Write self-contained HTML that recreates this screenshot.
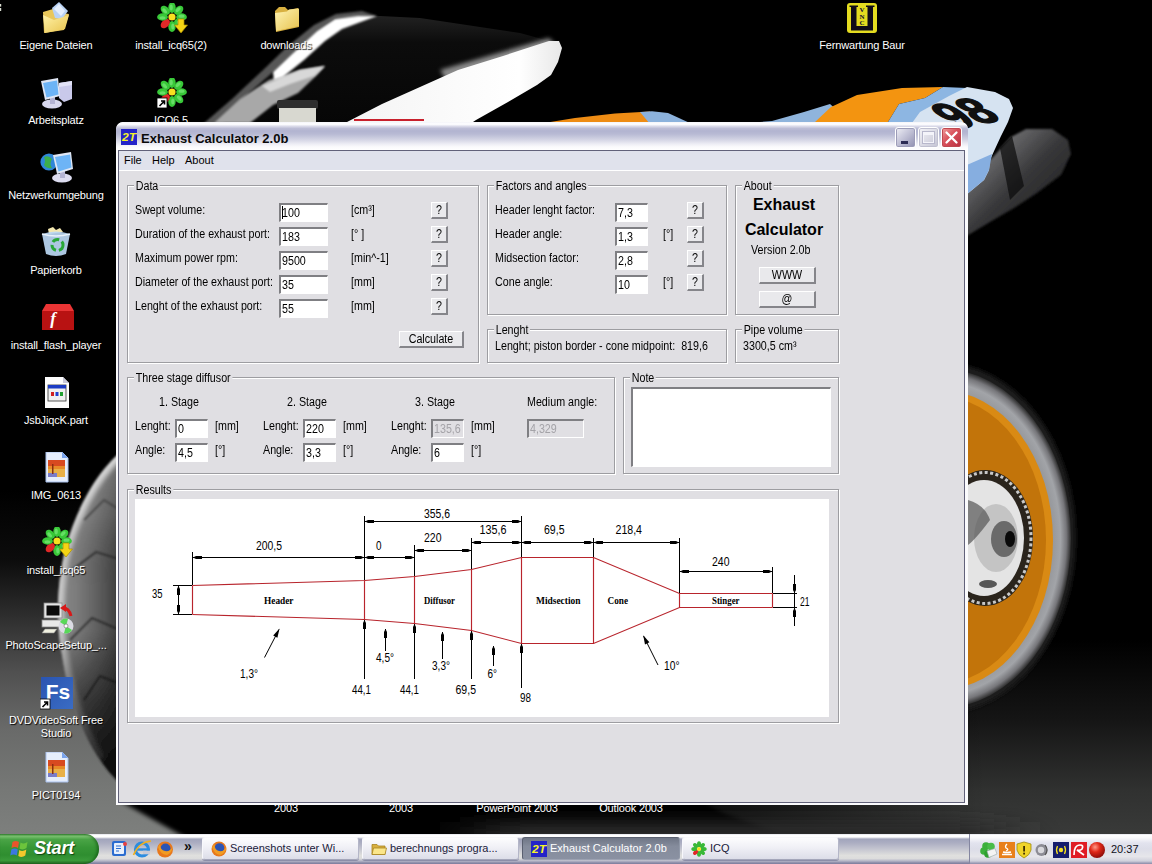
<!DOCTYPE html>
<html lang="de">
<head>
<meta charset="utf-8">
<title>Exhaust Calculator 2.0b</title>
<style>
*{box-sizing:border-box;margin:0;padding:0}
html,body{width:1152px;height:864px;overflow:hidden;background:#000}
body{position:relative;font-family:"Liberation Sans",sans-serif;font-size:11px;color:#000}
#bg{position:absolute;left:0;top:0;width:1152px;height:864px}
/* desktop icons */
.ico{position:absolute;width:120px;text-align:center;color:#fff;font-size:11px;line-height:13px;text-shadow:1px 1px 1px #000;white-space:nowrap;letter-spacing:-.15px}
.ico.w{white-space:normal}
.dic{position:absolute}
/* window */
#win{position:absolute;left:116px;top:122px;width:852px;height:683px;background:#fbfbfd;border-radius:7px 7px 0 0;overflow:hidden}
#title{position:absolute;left:0;top:0;width:852px;height:28px;border-radius:7px 7px 0 0;
 background:linear-gradient(#f2f2f7 0,#fcfcfe 4%,#fafafd 9%,#dcdcea 15%,#bcbdd6 23%,#b2b4d0 32%,#b8bad4 43%,#d0d1e2 61%,#eeeef5 79%,#fafafc 89%,#fff 100%)}
#title .tt{position:absolute;left:25px;top:9px;font-weight:bold;font-size:13px;line-height:16px;color:#0a0a0a;white-space:nowrap}
#inner{position:absolute;left:2px;top:28px;width:847px;height:653px;border:1px solid #62627a;background:#e0dfe3}
#menu{position:absolute;left:3px;top:29px;width:845px;height:20px;border-bottom:1px solid #fff;background:#e0e2ec}
#menu span{position:absolute;top:3px;line-height:13px}
#form{position:absolute;left:0;top:0;width:1152px;height:864px}
.t{position:absolute;white-space:nowrap;font-size:12.5px;line-height:13px;transform:scaleX(.856);transform-origin:0 0}
.gb{position:absolute;border:1px solid #9d9da1;box-shadow:1px 1px 0 #fff, inset 1px 1px 0 #fff}
.lg{background:#e0dfe3;padding:0 2px 0 2px;margin-left:-2px}
.in{position:absolute;background:#fff;border-style:solid;border-width:2px 1px 1px 2px;border-color:#7f7f83 #fff #fff #7f7f83;overflow:hidden}
.in .t{left:-1px;top:0px}
.in.dis{background:#e0dfe3;color:#a4a3a8}
.caret{position:absolute;left:1px;top:1px;width:1px;height:13px;background:#000}
.btn{position:absolute;background:#e9e9ec;border-style:solid;border-width:1px 2px 2px 1px;border-color:#fff #85858a #85858a #fff}
.tc{position:absolute;left:0;right:0;top:1px;text-align:center;white-space:nowrap;font-size:12.5px;line-height:13px;transform:scaleX(.856)}
.big{position:absolute;text-align:center;font-weight:bold;font-size:16px;line-height:20px;white-space:nowrap}
.ct{font-family:"Liberation Sans",sans-serif;font-size:12.5px;fill:#000}
.cs{font-family:"Liberation Serif",serif;font-size:10.5px;font-weight:bold;fill:#000}
#taskbar{position:absolute;left:0;top:834px;width:1152px;height:30px;
 background:linear-gradient(#d4d5e0 0,#fff 3%,#fff 10%,#a2a5bc 17%,#acaec2 30%,#c4c5d0 50%,#e0e0de 72%,#dcdcdc 82%,#b4b5c6 90%,#8c8ca8 96%,#7c7c9c 100%)}
#start{position:absolute;left:0;top:0;width:99px;height:30px;border-radius:0 14px 14px 0/0 15px 15px 0;
 background:linear-gradient(#3a8a36 0,#7cc272 7%,#4aa446 18%,#379636 45%,#2f8e30 70%,#3a9a3a 88%,#256a24 100%);box-shadow:inset -2px 0 3px rgba(0,60,0,.45)}
#start span{position:absolute;left:34px;top:4px;font-size:18px;line-height:20px;font-weight:bold;font-style:italic;color:#fff;text-shadow:1px 1px 1px rgba(0,40,0,.7);letter-spacing:-.2px}
.tb{position:absolute;top:3px;height:23px;border-radius:3px;border:1px solid #f8f8fc;border-bottom-color:#a4a6ba;border-right-color:#b4b6c8;
 background:linear-gradient(#fdfdfe 0,#f0f0f6 45%,#dcdde8 100%);box-shadow:0 1px 0 #8c8ea8}
.tb svg{position:absolute;left:8px;top:3px}
.tb span{position:absolute;left:27px;top:4px;line-height:13px;font-size:11px;white-space:nowrap;color:#20203a}
.tb.act{background:linear-gradient(#6f7686 0,#858c9c 40%,#8a91a2 100%);border-color:#5a6070 #9098a8 #9ca2b2 #5a6070;box-shadow:none}
.tb.act span{color:#fff}
#tray{position:absolute;left:969px;top:0;width:183px;height:30px;border-left:1px solid #8486a0;
 background:linear-gradient(#d4d5e0 0,#fff 3%,#fafafc 12%,#e2e3ee 30%,#dcdde8 50%,#e6e6ea 75%,#d0d1dc 90%,#9c9cb6 97%,#8c8ca8 100%)}
.clk{position:absolute;left:141px;top:9px;font-size:11px;line-height:13px;color:#101020}
.ti{position:absolute;left:5px;top:7px}
.cb{position:absolute;top:5px;width:21px;height:21px;border-radius:3px;border:1px solid #fff}
.cb.mn{left:779px;background:linear-gradient(135deg,#f0f0f6 0,#c4c4d8 45%,#8e8eb0 100%);box-shadow:inset 0 0 0 1px #9c9cb8}
.cb.mn i{position:absolute;left:5px;top:13px;width:7px;height:3px;background:#2c2c54}
.cb.mx{left:802px;background:linear-gradient(135deg,#f4f4f8 0,#dcdce6 50%,#c4c4d4 100%);box-shadow:inset 0 0 0 1px #c0c0d0}
.cb.mx i{position:absolute;left:4px;top:4px;width:11px;height:11px;border:1px solid #f4f4fa;border-top-width:3px;box-shadow:0 0 0 1px #b8b8cc}
.cb.cl{left:825px;background:linear-gradient(135deg,#f0a0a0 0,#d8505a 45%,#b83040 100%);box-shadow:inset 0 0 0 1px #c04850}
.cb.cl svg{position:absolute;left:-1px;top:-1px}
</style>
</head>
<body>
<svg id="bg" viewBox="0 0 1152 864" width="1152" height="864">
<defs>
 <linearGradient id="flL" gradientUnits="userSpaceOnUse" x1="0" y1="490" x2="0" y2="840">
  <stop offset="0" stop-color="#000"/><stop offset=".2" stop-color="#0c0c0c"/><stop offset=".357" stop-color="#2d2d2d"/><stop offset=".52" stop-color="#505050"/><stop offset=".683" stop-color="#696a69"/><stop offset=".857" stop-color="#767876"/><stop offset="1" stop-color="#7e807e"/>
 </linearGradient>
 <linearGradient id="flR" gradientUnits="userSpaceOnUse" x1="0" y1="640" x2="0" y2="840">
  <stop offset="0" stop-color="#000"/><stop offset=".4" stop-color="#151515"/><stop offset=".75" stop-color="#303130"/><stop offset="1" stop-color="#3a3b3a"/>
 </linearGradient>
 <linearGradient id="flRm" x1="0" y1="0" x2="1" y2="0">
  <stop offset="0" stop-color="#000" stop-opacity="1"/><stop offset=".35" stop-color="#000" stop-opacity=".5"/><stop offset=".7" stop-color="#000" stop-opacity="0"/>
 </linearGradient>
 <linearGradient id="tyL" gradientUnits="userSpaceOnUse" x1="56" y1="0" x2="260" y2="0">
  <stop offset="0" stop-color="#8a8a8a"/><stop offset=".1" stop-color="#7c7c7c"/><stop offset=".2" stop-color="#606060"/><stop offset=".32" stop-color="#3a3a3a"/><stop offset="1" stop-color="#101010"/>
 </linearGradient>
 <linearGradient id="tyLv" gradientUnits="userSpaceOnUse" x1="0" y1="445" x2="0" y2="800">
  <stop offset="0" stop-color="#fff" stop-opacity=".28"/><stop offset=".2" stop-color="#fff" stop-opacity=".12"/><stop offset=".4" stop-color="#000" stop-opacity="0"/><stop offset=".52" stop-color="#000" stop-opacity="0"/><stop offset=".72" stop-color="#000" stop-opacity=".5"/><stop offset=".88" stop-color="#000" stop-opacity=".8"/><stop offset="1" stop-color="#000" stop-opacity=".88"/>
 </linearGradient>
 <clipPath id="cTy"><path d="M130,445 C100,465 78,505 66,546 C56,585 56,625 62,655 C68,695 82,735 100,760 C110,775 125,790 140,800 L260,800 L260,445 Z"/></clipPath>
 <radialGradient id="tyR" cx=".5" cy=".5" r=".5">
  <stop offset="0" stop-color="#8a8a8a"/><stop offset=".86" stop-color="#96989c"/><stop offset=".92" stop-color="#a2a4a8"/><stop offset=".965" stop-color="#76767a"/><stop offset="1" stop-color="#2c2c2c"/>
 </radialGradient>
 <linearGradient id="rim" x1="0" y1="0" x2="1" y2="1">
  <stop offset="0" stop-color="#b86a08"/><stop offset=".4" stop-color="#d88412"/><stop offset="1" stop-color="#a85c06"/>
 </linearGradient>
 <linearGradient id="exh" x1="0" y1="0" x2="1" y2="1">
  <stop offset="0" stop-color="#505052"/><stop offset=".25" stop-color="#6c6c6e"/><stop offset=".5" stop-color="#38383a"/><stop offset="1" stop-color="#121212"/>
 </linearGradient>
 <linearGradient id="glass" x1="0" y1="0" x2="0" y2="1">
  <stop offset="0" stop-color="#222"/><stop offset=".25" stop-color="#0c0c0c"/><stop offset="1" stop-color="#060606"/>
 </linearGradient>
 <linearGradient id="wf" x1="0" y1="0" x2="1" y2="0">
  <stop offset="0" stop-color="#f4f4f4"/><stop offset=".8" stop-color="#fff"/><stop offset="1" stop-color="#e8e8e8"/>
 </linearGradient>
 <filter id="b1"><feGaussianBlur stdDeviation="1"/></filter>
 <filter id="b2"><feGaussianBlur stdDeviation="2.2"/></filter>
 <filter id="b4"><feGaussianBlur stdDeviation="5"/></filter>
 <clipPath id="cR"><rect x="960" y="340" width="192" height="500"/></clipPath>
 <linearGradient id="stp" gradientUnits="userSpaceOnUse" x1="0" y1="806" x2="0" y2="834"><stop offset="0" stop-color="#1e1e1e" stop-opacity="0"/><stop offset="1" stop-color="#262626" stop-opacity=".8"/></linearGradient>
 <filter id="b18" x="-20%" y="-100%" width="140%" height="300%"><feGaussianBlur stdDeviation="30 8"/></filter>
</defs>
<rect width="1152" height="864" fill="#000"/>
<!-- floor -->
<rect x="0" y="490" width="300" height="374" fill="url(#flL)"/>
<rect x="600" y="640" width="552" height="224" fill="url(#flR)"/><rect x="600" y="640" width="552" height="224" fill="url(#flRm)"/>
<!-- shadow under front tyre -->
<path d="M118,800 L190,840 L760,840 L700,800 Z" fill="#030303" filter="url(#b2)"/>
<path d="M150,805 L700,805 L780,834 L200,834 Z" fill="#000" filter="url(#b2)"/>
<!-- front tyre (left) -->
<g filter="url(#b1)">
 <path d="M130,445 C100,465 78,505 66,546 C56,585 56,625 62,655 C68,695 82,735 100,760 C110,775 125,790 140,800 L260,800 L260,445 Z" fill="url(#tyL)"/>
 <g clip-path="url(#cTy)">
  <path d="M130,445 C100,465 78,505 66,546 C56,585 56,625 62,655 C68,695 82,735 100,760" fill="none" stroke="#c8c8c8" stroke-width="12" filter="url(#b2)"/>
  <path d="M84,520 L104,500 L120,510 M72,570 L96,552 L122,560 M70,640 L92,618 L120,630 M84,700 L100,676 L120,684" fill="none" stroke="#1c1c1c" stroke-width="2.200" opacity=".75"/>
 </g>
 <path d="M130,445 C100,465 78,505 66,546 C56,585 56,625 62,655 C68,695 82,735 100,760 C110,775 125,790 140,800 L260,800 L260,445 Z" fill="url(#tyLv)"/>
</g>
<!-- rear wheel (right) -->
<g clip-path="url(#cR)">
 <ellipse cx="940" cy="538" rx="136" ry="176" fill="#1a1a1a" filter="url(#b2)"/>
 <ellipse cx="940" cy="538.5" rx="131" ry="170" fill="url(#tyR)"/>
 <ellipse cx="940" cy="540" rx="113" ry="150" fill="#d98a14"/>
 <ellipse cx="938" cy="540" rx="108" ry="144" fill="#c2740a"/>
 <ellipse cx="985" cy="538" rx="48" ry="68" fill="#2a241c"/>
 <ellipse cx="985" cy="538" rx="46" ry="65.5" fill="none" stroke="#c8c8c8" stroke-width="3" stroke-dasharray="3 2.5"/>
 <ellipse cx="984" cy="538" rx="40" ry="58" fill="#e4e4e4"/>
 <ellipse cx="996" cy="538" rx="22" ry="34" fill="#c4c4c4"/><path d="M968,500 Q985,505 990,520 Q975,540 968,545 Z" fill="#555" opacity=".7"/><ellipse cx="988" cy="584" rx="9" ry="4" fill="#333" opacity=".8"/>
 <ellipse cx="1004" cy="539" rx="13" ry="18" fill="#6a6a6a"/>
 <ellipse cx="1010" cy="539" rx="5" ry="8" fill="#0a0a0a"/>
</g>
<!-- exhaust -->
<path d="M960,240 L960,186 L993,157 L1011,137 L1026,129 L1052,129 L1068,140 L1071,154 L1061,175 L1037,193 L1014,208 L990,222 Z" fill="url(#exh)" filter="url(#b1)"/>
<path d="M1000,148 L1012,136 L1024,186 L1010,200 Z" fill="#0c0c0c" opacity=".7"/>
<!-- tank -->
<path d="M538,124 L575,118 L615,113.500 L650,111.500 L660,124 Z" fill="#ee8c14"/>
<path d="M640,112 L652,111.300 L668,113 L692,124 L650,124 Z" fill="#8cb2dc"/>
<!-- tail -->
<path d="M760,122 L772,121 L804,112 L830,104 L850,122 Z" fill="#8fb4dc"/>
<path d="M815,122 L831,107 L857,95 L902,88 L943,87 L925,98 L899,104 L888,122 Z" fill="#f39410"/>
<path d="M899,104 L925,98 L943,87 L967,88 L949,98 L925,110 L913,123 L888,122 Z" fill="#8db6e2"/>
<path d="M920,112 L949,96 L967,87 L995,92 L1009,99 L1013,108 L1008,122 L1001,136 L995,149 L990,160 L989,170 L984,180 L960,200 L960,123 L912,123 Z" fill="#d6e3f1"/>
<path d="M960,168 L992,154 L989,170 L984,180 L960,200 Z" fill="#86aee0"/>
<text transform="matrix(1.02,-0.21,1.0,0.78,955.5,129.5)" font-family="Liberation Sans,sans-serif" font-weight="bold" font-size="42" fill="#101010" stroke="#101010" stroke-width="1.6">98</text>
<!-- fairing / windscreen -->
<path d="M205,124 L240,97 L272,72 L300,40 L335,19 L360,15 L420,18 L520,33 L549,41 L470,124 Z" fill="url(#glass)"/>
<path d="M203,124 L232,99 L262,71 L288,46 L314,25 L336,14 L362,11 L377,16 L335,19 L317,31 L294,52 L273,72 L250,92 L222,124 Z" fill="#565656" filter="url(#b1)"/>
<path d="M214,123 L240,99 L269,80 L300,70 L325,66 L317,75 L298,93 L273,105 L250,123 Z" fill="#a8a8a8" filter="url(#b1)"/>
<path d="M262,86 L300,70 L325,66 L314,76 L290,84 L270,92 Z" fill="#d8d8d8" filter="url(#b1)"/>
<path d="M273,72 L294,52 L317,31 L335,19 L358,16 L377,16 L358,23 L342,29 L325,41 L304,60 L283,77 L274,80 Z" fill="#fff" filter="url(#b1)"/>
<path d="M440,70 L549,38 L555,44 L450,86 Z" fill="#8a8a8a" filter="url(#b2)"/>
<path d="M347,122 L382,104 L420,87 L458,70 L503,56 L549,41 L559,41 L562,48 L558,62 L551,75 L537,85 L508,102 L476,120 L470,124 Z" fill="url(#wf)"/>
<rect x="354" y="119" width="70" height="2" fill="#c8202c"/>
<rect x="277" y="100" width="41" height="9" rx="2" fill="#2e2e2e"/>
<rect x="279" y="108" width="37" height="16" fill="#d8d8d0"/>
<rect x="0" y="4" width="1.200" height="2.600" fill="#d8dcd0"/><rect x="0" y="8" width="1.200" height="3" fill="#d8dcd0"/>
<rect x="480" y="822" width="520" height="40" fill="#2a2a2a" filter="url(#b18)"/>
</svg>

<svg class="dic" style="left:40px;top:2px" width="32" height="32" viewBox="0 0 32 32">
<defs><linearGradient id="fo1" x1="0" y1="0" x2="1" y2="1"><stop offset="0" stop-color="#fff2a8"/><stop offset="1" stop-color="#e8c24a"/></linearGradient></defs>
<path d="M3,10 L13,7 L15,10 L29,12 L24,28 L4,31 Z" fill="#e9c75a"/>
<path d="M12,6 L19,0 L28,9 L22,17 L15,16 Z" fill="#b9d2f4"/>
<path d="M14,7 L19,2 L25,9 L21,14 Z" fill="#e4eefc"/>
<path d="M3,13 L14,18 L29,13 L25,27 L5,31 Z" fill="url(#fo1)"/>
</svg>
<div class="ico" style="left:-4px;top:39px">Eigene Dateien</div>
<svg class="dic" style="left:40px;top:77px" width="34" height="32" viewBox="0 0 34 32">
<path d="M19,6 L32,4 L32,22 L24,25 L19,21 Z" fill="#c9c9ea"/>
<path d="M19,6 L32,4 L32,8 L19,10 Z" fill="#e2e2f6"/>
<ellipse cx="12" cy="27" rx="10" ry="4.5" fill="#d8d8ee"/>
<rect x="10" y="20" width="5" height="7" fill="#b4b4d4"/>
<path d="M1,4 L18,1 L20,19 L5,23 Z" fill="#dfe6f4"/>
<path d="M3,6 L17,3.500 L18.500,17.500 L6.500,20.500 Z" fill="#6db4f6"/>
</svg>
<div class="ico" style="left:-4px;top:114px">Arbeitsplatz</div>
<svg class="dic" style="left:40px;top:151px" width="34" height="32" viewBox="0 0 34 32">
<circle cx="9" cy="11" r="8.600" fill="#2f86d8"/>
<path d="M4,6 Q9,4 12,8 Q9,13 12,17 Q7,18 4,14 Q6,10 4,6 Z" fill="#3cae4c"/>
<ellipse cx="22" cy="27" rx="10" ry="4.500" fill="#dcdcf0"/>
<rect x="20" y="19" width="5" height="8" fill="#b4b4d4"/>
<path d="M13,4 L31,1 L33,18 L17,23 Z" fill="#dfe6f4"/>
<path d="M15,6 L30,3.500 L31.500,16.500 L18.500,20.500 Z" fill="#6db4f6"/>
</svg>
<div class="ico" style="left:-4px;top:189px">Netzwerkumgebung</div>
<svg class="dic" style="left:41px;top:227px" width="30" height="30" viewBox="0 0 30 30">
<path d="M7,2 L12,0 L15,3 L19,1 L22,5 L8,7 Z" fill="#f4e8b0"/>
<path d="M1,7 Q15,2 29,7 L25,27 Q15,31 5,27 Z" fill="#bcd8f4" opacity=".92"/>
<path d="M1,7 Q15,11 29,7" stroke="#e8f2fc" stroke-width="1.500" fill="none"/>
<circle cx="16.500" cy="18" r="5.500" fill="none" stroke="#28a838" stroke-width="3" stroke-dasharray="7 3"/>
</svg>
<div class="ico" style="left:-4px;top:264px">Papierkorb</div>
<svg class="dic" style="left:42px;top:303px" width="32" height="28" viewBox="0 0 32 28">
<path d="M4,1 L28,1 L32,8 L0,8 Z" fill="#ea3434"/>
<rect x="0" y="8" width="32" height="19" fill="#c81414"/>
<rect x="0" y="8" width="32" height="19" fill="#000" opacity=".08"/>
<text x="11" y="21" font-family="Liberation Serif,serif" font-style="italic" font-weight="bold" font-size="17" fill="#fff" text-anchor="middle">f</text>
</svg>
<div class="ico" style="left:-4px;top:339px">install_flash_player</div>
<svg class="dic" style="left:44px;top:377px" width="26" height="32" viewBox="0 0 26 32">
<path d="M1,0 L19,0 L25,6 L25,31 L1,31 Z" fill="#fdfdfd"/>
<path d="M19,0 L19,6 L25,6 Z" fill="#c8c8d8"/>
<rect x="4" y="8" width="18" height="16" fill="#f0f0f0" stroke="#333" stroke-width=".8"/>
<rect x="4" y="8" width="18" height="3.500" fill="#1c3cc4"/>
<rect x="7" y="15" width="3" height="4" fill="#d02020"/><rect x="11.500" y="15" width="3" height="4" fill="#2040d0"/><rect x="16" y="15" width="3" height="4" fill="#20a030"/>
</svg>
<div class="ico" style="left:-4px;top:414px">JsbJiqcK.part</div>
<svg class="dic" style="left:45px;top:452px" width="24" height="31" viewBox="0 0 24 31">
<path d="M1,0 L17,0 L23,6 L23,30 L1,30 Z" fill="#e6eefc"/>
<path d="M1,0 L17,0 L23,6 L23,30 L1,30 Z" fill="none" stroke="#a8c0ec" stroke-width="1"/>
<path d="M17,0 L17,6 L23,6 Z" fill="#7aa4ec"/>
<rect x="3" y="8" width="17" height="17" fill="#e88a28"/>
<rect x="3" y="8" width="17" height="6" fill="#d84a20"/>
<rect x="3" y="17" width="17" height="8" fill="#e8b048"/>
<rect x="3" y="21" width="9" height="4" fill="#7a7cc8"/>
<rect x="7" y="12" width="1.500" height="10" fill="#8a3010"/>
</svg>
<div class="ico" style="left:-4px;top:489px">IMG_0613</div>
<svg class="dic" style="left:42px;top:527px" width="32" height="32" viewBox="0 0 32 32"><ellipse cx="15.0" cy="4.5" rx="5.400" ry="3.700" fill="#38c838" transform="rotate(-90 15.0 4.5)"/><ellipse cx="15.0" cy="3.7" rx="3" ry="1.600" fill="#8cf08c" opacity=".55" transform="rotate(-90 15.0 4.5)"/><ellipse cx="21.7" cy="7.3" rx="5.400" ry="3.700" fill="#38c838" transform="rotate(-45 21.7 7.3)"/><ellipse cx="21.7" cy="6.5" rx="3" ry="1.600" fill="#8cf08c" opacity=".55" transform="rotate(-45 21.7 7.3)"/><ellipse cx="24.5" cy="14.0" rx="5.400" ry="3.700" fill="#38c838" transform="rotate(0 24.5 14.0)"/><ellipse cx="24.5" cy="13.2" rx="3" ry="1.600" fill="#8cf08c" opacity=".55" transform="rotate(0 24.5 14.0)"/><ellipse cx="21.7" cy="20.7" rx="5.400" ry="3.700" fill="#38c838" transform="rotate(45 21.7 20.7)"/><ellipse cx="21.7" cy="19.9" rx="3" ry="1.600" fill="#8cf08c" opacity=".55" transform="rotate(45 21.7 20.7)"/><ellipse cx="15.0" cy="23.5" rx="5.400" ry="3.700" fill="#38c838" transform="rotate(90 15.0 23.5)"/><ellipse cx="15.0" cy="22.7" rx="3" ry="1.600" fill="#8cf08c" opacity=".55" transform="rotate(90 15.0 23.5)"/><ellipse cx="8.3" cy="20.7" rx="5.400" ry="3.700" fill="#e02828" transform="rotate(135 8.3 20.7)"/><ellipse cx="5.5" cy="14.0" rx="5.400" ry="3.700" fill="#38c838" transform="rotate(180 5.5 14.0)"/><ellipse cx="5.5" cy="13.2" rx="3" ry="1.600" fill="#8cf08c" opacity=".55" transform="rotate(180 5.5 14.0)"/><ellipse cx="8.3" cy="7.3" rx="5.400" ry="3.700" fill="#38c838" transform="rotate(225 8.3 7.3)"/><ellipse cx="8.3" cy="6.5" rx="3" ry="1.600" fill="#8cf08c" opacity=".55" transform="rotate(225 8.3 7.3)"/><circle cx="15" cy="14" r="3.600" fill="#f8e020"/><path d="M21,16 L27,16 L27,22 L30.500,22 L24,30 L17.500,22 L21,22 Z" fill="#f4d414" stroke="#a88a00" stroke-width=".7"/></svg>
<div class="ico" style="left:-4px;top:564px">install_icq65</div>
<svg class="dic" style="left:41px;top:602px" width="33" height="33" viewBox="0 0 33 33">
<rect x="3" y="1" width="18" height="15" fill="#e4e4e4" stroke="#888" stroke-width=".8"/>
<rect x="5.500" y="3.500" width="13" height="10" fill="#0a0a0a"/>
<rect x="1" y="18" width="22" height="7" fill="#e8e8e8" stroke="#888" stroke-width=".8"/>
<path d="M4,27 L16,27 L13,31 L1,31 Z" fill="#f0f0e0" stroke="#888" stroke-width=".6"/>
<path d="M22,6 Q28,6 30,14" stroke="#d81818" stroke-width="3" fill="none"/><path d="M19,6 L25,2 L25,10 Z" fill="#d81818"/>
<circle cx="25" cy="24" r="7.500" fill="#dcdce4"/>
<path d="M25,24 L19,20 A7.500,7.500 0 0 1 27,16.800 Z" fill="#58d858"/><path d="M25,24 L31,28 A7.500,7.500 0 0 1 23,31.200 Z" fill="#58d858"/>
<circle cx="25" cy="24" r="2" fill="#fff" stroke="#666" stroke-width=".6"/>
</svg>
<div class="ico" style="left:-4px;top:639px">PhotoScapeSetup_...</div>
<svg class="dic" style="left:40px;top:676px" width="34" height="34" viewBox="0 0 34 34">
<defs><linearGradient id="fsg" x1="0" y1="0" x2="1" y2="1"><stop offset="0" stop-color="#2a54b0"/><stop offset="1" stop-color="#3a6cc4"/></linearGradient></defs>
<rect x="1" y="1" width="32" height="32" fill="url(#fsg)"/>
<text x="18" y="23" font-family="Liberation Sans,sans-serif" font-weight="bold" font-size="21" fill="#fff" text-anchor="middle">Fs</text>
<rect x="0" y="23" width="10" height="10" fill="#fff" stroke="#000" stroke-width=".8"/><path d="M2.5,31 L7.5,26 M4,26 L7.5,26 L7.5,29.5" stroke="#000" stroke-width="1.6" fill="none"/></svg>
<div class="ico w" style="left:-4px;top:714px">DVDVideoSoft Free Studio</div>
<svg class="dic" style="left:45px;top:752px" width="24" height="31" viewBox="0 0 24 31">
<path d="M1,0 L17,0 L23,6 L23,30 L1,30 Z" fill="#e6eefc"/>
<path d="M1,0 L17,0 L23,6 L23,30 L1,30 Z" fill="none" stroke="#a8c0ec" stroke-width="1"/>
<path d="M17,0 L17,6 L23,6 Z" fill="#7aa4ec"/>
<rect x="3" y="8" width="17" height="17" fill="#e88a28"/>
<rect x="3" y="8" width="17" height="6" fill="#d84a20"/>
<rect x="3" y="17" width="17" height="8" fill="#e8b048"/>
<rect x="3" y="21" width="9" height="4" fill="#7a7cc8"/>
<rect x="7" y="12" width="1.500" height="10" fill="#8a3010"/>
</svg>
<div class="ico" style="left:-4px;top:789px">PICT0194</div>
<svg class="dic" style="left:157px;top:3px" width="32" height="32" viewBox="0 0 32 32"><ellipse cx="15.0" cy="4.5" rx="5.400" ry="3.700" fill="#38c838" transform="rotate(-90 15.0 4.5)"/><ellipse cx="15.0" cy="3.7" rx="3" ry="1.600" fill="#8cf08c" opacity=".55" transform="rotate(-90 15.0 4.5)"/><ellipse cx="21.7" cy="7.3" rx="5.400" ry="3.700" fill="#38c838" transform="rotate(-45 21.7 7.3)"/><ellipse cx="21.7" cy="6.5" rx="3" ry="1.600" fill="#8cf08c" opacity=".55" transform="rotate(-45 21.7 7.3)"/><ellipse cx="24.5" cy="14.0" rx="5.400" ry="3.700" fill="#38c838" transform="rotate(0 24.5 14.0)"/><ellipse cx="24.5" cy="13.2" rx="3" ry="1.600" fill="#8cf08c" opacity=".55" transform="rotate(0 24.5 14.0)"/><ellipse cx="21.7" cy="20.7" rx="5.400" ry="3.700" fill="#38c838" transform="rotate(45 21.7 20.7)"/><ellipse cx="21.7" cy="19.9" rx="3" ry="1.600" fill="#8cf08c" opacity=".55" transform="rotate(45 21.7 20.7)"/><ellipse cx="15.0" cy="23.5" rx="5.400" ry="3.700" fill="#38c838" transform="rotate(90 15.0 23.5)"/><ellipse cx="15.0" cy="22.7" rx="3" ry="1.600" fill="#8cf08c" opacity=".55" transform="rotate(90 15.0 23.5)"/><ellipse cx="8.3" cy="20.7" rx="5.400" ry="3.700" fill="#e02828" transform="rotate(135 8.3 20.7)"/><ellipse cx="5.5" cy="14.0" rx="5.400" ry="3.700" fill="#38c838" transform="rotate(180 5.5 14.0)"/><ellipse cx="5.5" cy="13.2" rx="3" ry="1.600" fill="#8cf08c" opacity=".55" transform="rotate(180 5.5 14.0)"/><ellipse cx="8.3" cy="7.3" rx="5.400" ry="3.700" fill="#38c838" transform="rotate(225 8.3 7.3)"/><ellipse cx="8.3" cy="6.5" rx="3" ry="1.600" fill="#8cf08c" opacity=".55" transform="rotate(225 8.3 7.3)"/><circle cx="15" cy="14" r="3.600" fill="#f8e020"/><path d="M21,16 L27,16 L27,22 L30.500,22 L24,30 L17.500,22 L21,22 Z" fill="#f4d414" stroke="#a88a00" stroke-width=".7"/></svg>
<div class="ico" style="left:111px;top:39px">install_icq65(2)</div>
<svg class="dic" style="left:157px;top:78px" width="32" height="32" viewBox="0 0 32 32"><ellipse cx="15.0" cy="4.5" rx="5.400" ry="3.700" fill="#38c838" transform="rotate(-90 15.0 4.5)"/><ellipse cx="15.0" cy="3.7" rx="3" ry="1.600" fill="#8cf08c" opacity=".55" transform="rotate(-90 15.0 4.5)"/><ellipse cx="21.7" cy="7.3" rx="5.400" ry="3.700" fill="#38c838" transform="rotate(-45 21.7 7.3)"/><ellipse cx="21.7" cy="6.5" rx="3" ry="1.600" fill="#8cf08c" opacity=".55" transform="rotate(-45 21.7 7.3)"/><ellipse cx="24.5" cy="14.0" rx="5.400" ry="3.700" fill="#38c838" transform="rotate(0 24.5 14.0)"/><ellipse cx="24.5" cy="13.2" rx="3" ry="1.600" fill="#8cf08c" opacity=".55" transform="rotate(0 24.5 14.0)"/><ellipse cx="21.7" cy="20.7" rx="5.400" ry="3.700" fill="#38c838" transform="rotate(45 21.7 20.7)"/><ellipse cx="21.7" cy="19.9" rx="3" ry="1.600" fill="#8cf08c" opacity=".55" transform="rotate(45 21.7 20.7)"/><ellipse cx="15.0" cy="23.5" rx="5.400" ry="3.700" fill="#38c838" transform="rotate(90 15.0 23.5)"/><ellipse cx="15.0" cy="22.7" rx="3" ry="1.600" fill="#8cf08c" opacity=".55" transform="rotate(90 15.0 23.5)"/><ellipse cx="8.3" cy="20.7" rx="5.400" ry="3.700" fill="#e02828" transform="rotate(135 8.3 20.7)"/><ellipse cx="5.5" cy="14.0" rx="5.400" ry="3.700" fill="#38c838" transform="rotate(180 5.5 14.0)"/><ellipse cx="5.5" cy="13.2" rx="3" ry="1.600" fill="#8cf08c" opacity=".55" transform="rotate(180 5.5 14.0)"/><ellipse cx="8.3" cy="7.3" rx="5.400" ry="3.700" fill="#38c838" transform="rotate(225 8.3 7.3)"/><ellipse cx="8.3" cy="6.5" rx="3" ry="1.600" fill="#8cf08c" opacity=".55" transform="rotate(225 8.3 7.3)"/><circle cx="15" cy="14" r="3.600" fill="#f8e020"/><rect x="0" y="20" width="10" height="10" fill="#fff" stroke="#000" stroke-width=".8"/><path d="M2.5,28 L7.5,23 M4,23 L7.5,23 L7.5,26.5" stroke="#000" stroke-width="1.6" fill="none"/></svg>
<div class="ico" style="left:111px;top:114px">ICQ6.5</div>
<svg class="dic" style="left:273px;top:5px" width="28" height="28" viewBox="0 0 28 28">
<defs><linearGradient id="fo3" x1="0" y1="0" x2="1" y2="1"><stop offset="0" stop-color="#fff4b4"/><stop offset="1" stop-color="#e6c24e"/></linearGradient></defs>
<path d="M2,6 L6,2 L12,2 L15,5 L25,3 L26,22 L3,27 Z" fill="#d8b040"/>
<path d="M2,8 L14,6.500 L16,4.500 L26,3.500 L26,21 L3,26 Z" fill="url(#fo3)"/>
</svg>
<div class="ico" style="left:226px;top:39px">downloads</div>
<svg class="dic" style="left:846px;top:2px" width="32" height="32" viewBox="0 0 32 32">
<rect x="1" y="1" width="30" height="30" rx="3" fill="#e4dc20"/>
<path d="M3.500,3.500 L12,3.500 L12,5 L10.500,5 L10.500,24 L21.500,24 L21.500,5 L20,5 L20,3.500 L28.500,3.500 L28.500,5 L27,5 L27,28.500 L5,28.500 L5,5 L3.500,5 Z" fill="#100c18"/>
<text x="16" y="10" font-family="Liberation Serif,serif" font-weight="bold" font-size="7" fill="#100c30" text-anchor="middle">V</text>
<text x="16" y="16.500" font-family="Liberation Serif,serif" font-weight="bold" font-size="7" fill="#100c30" text-anchor="middle">N</text>
<text x="16" y="23" font-family="Liberation Serif,serif" font-weight="bold" font-size="7" fill="#100c30" text-anchor="middle">C</text>
</svg>
<div class="ico" style="left:802px;top:39px">Fernwartung Baur</div>
<div class="ico" style="left:226px;top:802px">2003</div>
<div class="ico" style="left:341px;top:802px">2003</div>
<div class="ico" style="left:457px;top:802px">PowerPoint 2003</div>
<div class="ico" style="left:571px;top:802px">Outlook 2003</div>
<div id="win">
 <div id="title"><svg class="ti" width="16" height="16" viewBox="0 0 16 16"><rect width="16" height="16" fill="#2424c8"/><text x="8" y="11.500" font-family="Liberation Sans,sans-serif" font-weight="bold" font-style="italic" font-size="10.500" fill="#f4f428" text-anchor="middle" textLength="14" lengthAdjust="spacingAndGlyphs">2T</text></svg><span class="tt">Exhaust Calculator 2.0b</span>
  <div class="cb mn"><i></i></div><div class="cb mx"><i></i></div><div class="cb cl"><svg width="21" height="21" viewBox="0 0 21 21"><path d="M5.500,5.500 L15.500,15.500 M15.500,5.500 L5.500,15.500" stroke="#fff" stroke-width="2.300" stroke-linecap="round"/></svg></div></div>
 <div id="inner"></div>
 <div id="menu"><span style="left:5px">File</span><span style="left:33px">Help</span><span style="left:66px">About</span></div>
</div>
<div id="form">
<div class="gb" style="left:127px;top:185px;width:352px;height:178px"></div>
<div class="t lg" style="left:136px;top:180px">Data</div>
<div class="t" style="left:135px;top:204px;">Swept volume:</div>
<div class="in" style="left:279px;top:203px;width:49px;height:19px"><i class="caret"></i><span class="t" style="left:1px;top:2px">100</span></div>
<div class="t" style="left:351px;top:204px;">[cm³]</div>
<div class="btn" style="left:431px;top:202px;width:17px;height:17px"><span class="tc">?</span></div>
<div class="t" style="left:135px;top:228px;">Duration of the exhaust port:</div>
<div class="in" style="left:279px;top:227px;width:49px;height:19px"><span class="t" style="left:1px;top:2px">183</span></div>
<div class="t" style="left:351px;top:228px;">[° ]</div>
<div class="btn" style="left:431px;top:226px;width:17px;height:17px"><span class="tc">?</span></div>
<div class="t" style="left:135px;top:252px;">Maximum power rpm:</div>
<div class="in" style="left:279px;top:251px;width:49px;height:19px"><span class="t" style="left:1px;top:2px">9500</span></div>
<div class="t" style="left:351px;top:252px;">[min^-1]</div>
<div class="btn" style="left:431px;top:250px;width:17px;height:17px"><span class="tc">?</span></div>
<div class="t" style="left:135px;top:276px;">Diameter of the exhaust port:</div>
<div class="in" style="left:279px;top:275px;width:49px;height:19px"><span class="t" style="left:1px;top:2px">35</span></div>
<div class="t" style="left:351px;top:276px;">[mm]</div>
<div class="btn" style="left:431px;top:274px;width:17px;height:17px"><span class="tc">?</span></div>
<div class="t" style="left:135px;top:300px;">Lenght of the exhaust port:</div>
<div class="in" style="left:279px;top:299px;width:49px;height:19px"><span class="t" style="left:1px;top:2px">55</span></div>
<div class="t" style="left:351px;top:300px;">[mm]</div>
<div class="btn" style="left:431px;top:298px;width:17px;height:17px"><span class="tc">?</span></div>
<div class="btn" style="left:399px;top:331px;width:65px;height:17px"><span class="tc">Calculate</span></div>
<div class="gb" style="left:487px;top:185px;width:240px;height:130px"></div>
<div class="t lg" style="left:496px;top:180px">Factors and angles</div>
<div class="t" style="left:495px;top:204px;">Header lenght factor:</div>
<div class="in" style="left:615px;top:203px;width:33px;height:19px"><span class="t" style="left:1px;top:2px">7,3</span></div>
<div class="btn" style="left:687px;top:202px;width:17px;height:17px"><span class="tc">?</span></div>
<div class="t" style="left:495px;top:228px;">Header angle:</div>
<div class="in" style="left:615px;top:227px;width:33px;height:19px"><span class="t" style="left:1px;top:2px">1,3</span></div>
<div class="t" style="left:663px;top:228px;">[°]</div>
<div class="btn" style="left:687px;top:226px;width:17px;height:17px"><span class="tc">?</span></div>
<div class="t" style="left:495px;top:252px;">Midsection factor:</div>
<div class="in" style="left:615px;top:251px;width:33px;height:19px"><span class="t" style="left:1px;top:2px">2,8</span></div>
<div class="btn" style="left:687px;top:250px;width:17px;height:17px"><span class="tc">?</span></div>
<div class="t" style="left:495px;top:276px;">Cone angle:</div>
<div class="in" style="left:615px;top:275px;width:33px;height:19px"><span class="t" style="left:1px;top:2px">10</span></div>
<div class="t" style="left:663px;top:276px;">[°]</div>
<div class="btn" style="left:687px;top:274px;width:17px;height:17px"><span class="tc">?</span></div>
<div class="gb" style="left:735px;top:185px;width:104px;height:130px"></div>
<div class="t lg" style="left:744px;top:180px">About</div>
<div class="big" style="left:734px;top:195px;width:100px">Exhaust</div>
<div class="big" style="left:734px;top:220px;width:100px">Calculator</div>
<div class="t" style="left:751px;top:244px;">Version 2.0b</div>
<div class="btn" style="left:759px;top:267px;width:57px;height:17px"><span class="tc">WWW</span></div>
<div class="btn" style="left:759px;top:291px;width:57px;height:17px"><span class="tc">@</span></div>
<div class="gb" style="left:487px;top:329px;width:240px;height:34px"></div>
<div class="t lg" style="left:496px;top:324px">Lenght</div>
<div class="t" style="left:495px;top:340px;">Lenght; piston border - cone midpoint:&nbsp; 819,6</div>
<div class="gb" style="left:735px;top:329px;width:104px;height:34px"></div>
<div class="t lg" style="left:744px;top:324px">Pipe volume</div>
<div class="t" style="left:743px;top:340px;">3300,5 cm³</div>
<div class="gb" style="left:127px;top:377px;width:488px;height:97px"></div>
<div class="t lg" style="left:136px;top:372px">Three stage diffusor</div>
<div class="t" style="left:159px;top:396px;">1. Stage</div>
<div class="t" style="left:135px;top:420px;">Lenght:</div>
<div class="in" style="left:175px;top:419px;width:33px;height:19px"><span class="t" style="left:1px;top:2px">0</span></div>
<div class="t" style="left:215px;top:420px;">[mm]</div>
<div class="t" style="left:135px;top:444px;">Angle:</div>
<div class="in" style="left:175px;top:443px;width:33px;height:19px"><span class="t" style="left:1px;top:2px">4,5</span></div>
<div class="t" style="left:215px;top:444px;">[°]</div>
<div class="t" style="left:287px;top:396px;">2. Stage</div>
<div class="t" style="left:263px;top:420px;">Lenght:</div>
<div class="in" style="left:303px;top:419px;width:33px;height:19px"><span class="t" style="left:1px;top:2px">220</span></div>
<div class="t" style="left:343px;top:420px;">[mm]</div>
<div class="t" style="left:263px;top:444px;">Angle:</div>
<div class="in" style="left:303px;top:443px;width:33px;height:19px"><span class="t" style="left:1px;top:2px">3,3</span></div>
<div class="t" style="left:343px;top:444px;">[°]</div>
<div class="t" style="left:415px;top:396px;">3. Stage</div>
<div class="t" style="left:391px;top:420px;">Lenght:</div>
<div class="in dis" style="left:431px;top:419px;width:33px;height:19px"><span class="t" style="left:1px;top:2px">135,6</span></div>
<div class="t" style="left:471px;top:420px;">[mm]</div>
<div class="t" style="left:391px;top:444px;">Angle:</div>
<div class="in" style="left:431px;top:443px;width:33px;height:19px"><span class="t" style="left:1px;top:2px">6</span></div>
<div class="t" style="left:471px;top:444px;">[°]</div>
<div class="t" style="left:527px;top:396px;">Medium angle:</div>
<div class="in dis" style="left:527px;top:419px;width:57px;height:19px"><span class="t" style="left:1px;top:2px">4,329</span></div>
<div class="gb" style="left:623px;top:377px;width:216px;height:97px"></div>
<div class="t lg" style="left:632px;top:372px">Note</div>
<div class="in" style="left:631px;top:387px;width:200px;height:80px"></div>
<div class="gb" style="left:127px;top:489px;width:712px;height:234px"></div>
<div class="t lg" style="left:136px;top:484px">Results</div>
<svg class="cv" style="position:absolute;left:135px;top:499px" width="694" height="218" viewBox="135 499 694 218">
<rect x="135" y="499" width="694" height="218" fill="#fff"/>
<g fill="none" stroke="#b8242c" stroke-width="1.15">
<polyline points="192.5,585.5 364.5,580.5 414.5,576.5 471.5,569.5 521.5,557.5 593.5,557.5 679.5,593.5 772.5,593.5"/>
<polyline points="192.5,614.5 364.5,619.5 414.5,623.5 471.5,630.5 521.5,643.5 593.5,643.5 679.5,607.5 772.5,607.5"/>
<line x1="192.5" y1="585.5" x2="192.5" y2="614.5"/>
<line x1="364.5" y1="580.5" x2="364.5" y2="619.5"/>
<line x1="414.5" y1="576.5" x2="414.5" y2="623.5"/>
<line x1="471.5" y1="569.5" x2="471.5" y2="630.5"/>
<line x1="521.5" y1="557.5" x2="521.5" y2="643.5"/>
<line x1="593.5" y1="557.5" x2="593.5" y2="643.5"/>
<line x1="679.5" y1="593.5" x2="679.5" y2="607.5"/>
<line x1="772.5" y1="593.5" x2="772.5" y2="607.5"/>
</g>
<g stroke="#000" stroke-width="1" fill="#000" shape-rendering="crispEdges">
<line x1="192.5" y1="552" x2="192.5" y2="585"/>
<line x1="364.5" y1="516" x2="364.5" y2="580"/>
<line x1="414.5" y1="545" x2="414.5" y2="576"/>
<line x1="471.5" y1="538" x2="471.5" y2="569"/>
<line x1="521.5" y1="516" x2="521.5" y2="557"/>
<line x1="593.5" y1="538" x2="593.5" y2="557"/>
<line x1="679.5" y1="538" x2="679.5" y2="593"/>
<line x1="772.5" y1="567" x2="772.5" y2="593"/>
<line x1="192" y1="557.5" x2="365" y2="557.5"/>
<path d="M193,557.5 L196,556 L202,556 L202,559 L196,559 Z" stroke="none" shape-rendering="geometricPrecision"/>
<path d="M364,557.5 L361,556 L355,556 L355,559 L361,559 Z" stroke="none" shape-rendering="geometricPrecision"/>
<line x1="364" y1="521.5" x2="522" y2="521.5"/>
<path d="M365,521.5 L368,520 L374,520 L374,523 L368,523 Z" stroke="none" shape-rendering="geometricPrecision"/>
<path d="M521,521.5 L518,520 L512,520 L512,523 L518,523 Z" stroke="none" shape-rendering="geometricPrecision"/>
<line x1="364" y1="557.5" x2="415" y2="557.5"/>
<path d="M365,557.5 L368,556 L374,556 L374,559 L368,559 Z" stroke="none" shape-rendering="geometricPrecision"/>
<path d="M414,557.5 L411,556 L405,556 L405,559 L411,559 Z" stroke="none" shape-rendering="geometricPrecision"/>
<line x1="414" y1="550.5" x2="472" y2="550.5"/>
<path d="M415,550.5 L418,549 L424,549 L424,552 L418,552 Z" stroke="none" shape-rendering="geometricPrecision"/>
<path d="M471,550.5 L468,549 L462,549 L462,552 L468,552 Z" stroke="none" shape-rendering="geometricPrecision"/>
<line x1="471" y1="542.5" x2="522" y2="542.5"/>
<path d="M472,542.5 L475,541 L481,541 L481,544 L475,544 Z" stroke="none" shape-rendering="geometricPrecision"/>
<path d="M521,542.5 L518,541 L512,541 L512,544 L518,544 Z" stroke="none" shape-rendering="geometricPrecision"/>
<line x1="521" y1="542.5" x2="594" y2="542.5"/>
<path d="M522,542.5 L525,541 L531,541 L531,544 L525,544 Z" stroke="none" shape-rendering="geometricPrecision"/>
<path d="M593,542.5 L590,541 L584,541 L584,544 L590,544 Z" stroke="none" shape-rendering="geometricPrecision"/>
<line x1="593" y1="542.5" x2="680" y2="542.5"/>
<path d="M594,542.5 L597,541 L603,541 L603,544 L597,544 Z" stroke="none" shape-rendering="geometricPrecision"/>
<path d="M679,542.5 L676,541 L670,541 L670,544 L676,544 Z" stroke="none" shape-rendering="geometricPrecision"/>
<line x1="679" y1="571.5" x2="773" y2="571.5"/>
<path d="M680,571.5 L683,570 L689,570 L689,573 L683,573 Z" stroke="none" shape-rendering="geometricPrecision"/>
<path d="M772,571.5 L769,570 L763,570 L763,573 L769,573 Z" stroke="none" shape-rendering="geometricPrecision"/>
<line x1="173" y1="585.5" x2="192" y2="585.5"/>
<line x1="173" y1="614.5" x2="192" y2="614.5"/>
<line x1="178.5" y1="585" x2="178.5" y2="614"/>
<path d="M178.5,586 L177,589 L177,595 L180,595 L180,589 Z" stroke="none" shape-rendering="geometricPrecision"/>
<path d="M178.5,614 L177,611 L177,605 L180,605 L180,611 Z" stroke="none" shape-rendering="geometricPrecision"/>
<line x1="773" y1="593.5" x2="797" y2="593.5"/>
<line x1="773" y1="607.5" x2="797" y2="607.5"/>
<line x1="794.5" y1="575" x2="794.5" y2="626"/>
<path d="M794.5,593 L793,590 L793,584 L796,584 L796,590 Z" stroke="none" shape-rendering="geometricPrecision"/>
<path d="M794.5,608 L793,611 L793,617 L796,617 L796,611 Z" stroke="none" shape-rendering="geometricPrecision"/>
<line x1="364.5" y1="620" x2="364.5" y2="679"/>
<path d="M364.5,620 L363,623 L363,629 L366,629 L366,623 Z" stroke="none" shape-rendering="geometricPrecision"/>
<line x1="414.5" y1="624" x2="414.5" y2="679"/>
<path d="M414.5,624 L413,627 L413,633 L416,633 L416,627 Z" stroke="none" shape-rendering="geometricPrecision"/>
<line x1="471.5" y1="631" x2="471.5" y2="679"/>
<path d="M471.5,631 L470,634 L470,640 L473,640 L473,634 Z" stroke="none" shape-rendering="geometricPrecision"/>
<line x1="521.5" y1="644" x2="521.5" y2="688"/>
<path d="M521.5,644 L520,647 L520,653 L523,653 L523,647 Z" stroke="none" shape-rendering="geometricPrecision"/>
<line x1="385.5" y1="629" x2="385.5" y2="651"/>
<path d="M385.5,629 L384,632 L384,638 L387,638 L387,632 Z" stroke="none" shape-rendering="geometricPrecision"/>
<line x1="442.5" y1="632" x2="442.5" y2="659"/>
<path d="M442.5,632 L441,635 L441,641 L444,641 L444,635 Z" stroke="none" shape-rendering="geometricPrecision"/>
<line x1="493.5" y1="646" x2="493.5" y2="666"/>
<path d="M493.5,646 L492,649 L492,655 L495,655 L495,649 Z" stroke="none" shape-rendering="geometricPrecision"/>
</g>
<g stroke="#000" stroke-width="1" fill="#000">
<line x1="264.5" y1="657.5" x2="279" y2="629.5"/>
<path d="M279.5,628.5 L273.2,635.6 L277.4,637.8 Z" stroke="none" shape-rendering="geometricPrecision"/>
<line x1="658" y1="665" x2="643.6" y2="636.2"/>
<path d="M643.2,635.2 L645.0,644.4 L649.4,642.2 Z" stroke="none" shape-rendering="geometricPrecision"/>
</g>
<text x="256" y="550" class="ct" textLength="26" lengthAdjust="spacingAndGlyphs">200,5</text>
<text x="424" y="518" class="ct" textLength="26" lengthAdjust="spacingAndGlyphs">355,6</text>
<text x="376" y="550" class="ct" textLength="5.5" lengthAdjust="spacingAndGlyphs">0</text>
<text x="424" y="542" class="ct" textLength="17.5" lengthAdjust="spacingAndGlyphs">220</text>
<text x="479.5" y="534" class="ct" textLength="27" lengthAdjust="spacingAndGlyphs">135,6</text>
<text x="544" y="534" class="ct" textLength="20.5" lengthAdjust="spacingAndGlyphs">69,5</text>
<text x="615.5" y="534" class="ct" textLength="26.5" lengthAdjust="spacingAndGlyphs">218,4</text>
<text x="712" y="566" class="ct" textLength="17.5" lengthAdjust="spacingAndGlyphs">240</text>
<text x="152" y="598" class="ct" textLength="10.5" lengthAdjust="spacingAndGlyphs">35</text>
<text x="800" y="606" class="ct" textLength="9.5" lengthAdjust="spacingAndGlyphs">21</text>
<text x="240" y="678" class="ct" textLength="18" lengthAdjust="spacingAndGlyphs">1,3°</text>
<text x="376" y="662" class="ct" textLength="18" lengthAdjust="spacingAndGlyphs">4,5°</text>
<text x="432" y="670" class="ct" textLength="18" lengthAdjust="spacingAndGlyphs">3,3°</text>
<text x="487.5" y="678" class="ct" textLength="9.5" lengthAdjust="spacingAndGlyphs">6°</text>
<text x="664" y="670" class="ct" textLength="15.5" lengthAdjust="spacingAndGlyphs">10°</text>
<text x="352" y="694" class="ct" textLength="19" lengthAdjust="spacingAndGlyphs">44,1</text>
<text x="400" y="694" class="ct" textLength="19" lengthAdjust="spacingAndGlyphs">44,1</text>
<text x="455.5" y="694" class="ct" textLength="20.5" lengthAdjust="spacingAndGlyphs">69,5</text>
<text x="520" y="702" class="ct" textLength="11" lengthAdjust="spacingAndGlyphs">98</text>
<text x="264" y="604" class="cs" textLength="29.5" lengthAdjust="spacingAndGlyphs">Header</text>
<text x="424" y="604" class="cs" textLength="31" lengthAdjust="spacingAndGlyphs">Diffusor</text>
<text x="536" y="604" class="cs" textLength="44.5" lengthAdjust="spacingAndGlyphs">Midsection</text>
<text x="607.5" y="604" class="cs" textLength="20.5" lengthAdjust="spacingAndGlyphs">Cone</text>
<text x="712" y="604" class="cs" textLength="27.5" lengthAdjust="spacingAndGlyphs">Stinger</text>
</svg>
</div>
<div id="taskbar">
<div id="start"><svg width="20" height="20" viewBox="0 0 20 20" style="position:absolute;left:10px;top:5px">
<path d="M2.500,3 Q5.500,1 9,3 L8,9 Q5,7 1.500,9 Z" fill="#e8542c"/>
<path d="M10.500,3.500 Q14,5.500 17.500,3 L16.500,9 Q13,11.500 9.500,9.500 Z" fill="#6cc43c"/>
<path d="M1.300,10.500 Q4.500,8.500 7.800,10.500 L6.800,16.500 Q3.500,14.500 0.300,16.500 Z" fill="#3c78e0"/>
<path d="M9.300,11 Q12.500,13 16.300,10.500 L15.300,16.500 Q12,19 8.300,17 Z" fill="#f4c82c"/>
</svg><span>Start</span></div>
<svg style="position:absolute;left:110px;top:4px" width="90" height="24" viewBox="0 0 90 24">
<rect x="2" y="3" width="14" height="15" rx="2" fill="#2a6cd0"/><rect x="4" y="5" width="10" height="11" rx="1" fill="#e8f0fc"/><path d="M6,8 L11,8 M6,10.500 L11,10.500 M6,13 L9,13" stroke="#2a6cd0" stroke-width="1.200"/><circle cx="15" cy="6" r="2" fill="#e84040"/>
<circle cx="32" cy="11.500" r="6.500" fill="none" stroke="#2c8ce0" stroke-width="3.200"/><path d="M27,11.500 L38,11.500" stroke="#2c8ce0" stroke-width="2.400"/><rect x="33" y="12.700" width="7" height="3.600" fill="#c7c8d4"/><path d="M23.500,17 Q29,4 41,3" stroke="#f0b020" stroke-width="1.600" fill="none"/>
<circle cx="55" cy="11.500" r="8" fill="#e8781c"/><circle cx="55.500" cy="10.500" r="5" fill="#2c54b4"/><path d="M48,9 Q50,16 57,17 Q62,15 62.500,9 Q60,14 55,13 Q50,12 50,6 Z" fill="#f09c24"/>
<text x="74" y="12.500" font-family="Liberation Sans,sans-serif" font-weight="bold" font-size="14" fill="#101010">»</text>
</svg>
<div class="tb" style="left:202px;width:157px"><svg width="16" height="16" viewBox="0 0 16 16"><circle cx="8" cy="8" r="7.500" fill="#e8781c"/><circle cx="8.500" cy="7" r="4.800" fill="#2c54b4"/><path d="M1,6 Q3,13 9.500,14 Q15,12 15.300,6 Q13,11 8,10 Q3.500,9 3.500,3 Z" fill="#f09c24"/></svg><span>Screenshots unter Wi...</span></div>
<div class="tb" style="left:362px;width:157px"><svg width="16" height="16" viewBox="0 0 16 16"><path d="M1,3.500 L6,3.500 L7.500,5 L14,5 L14,13.500 L1,13.500 Z" fill="#d8b040" stroke="#a88420" stroke-width=".8"/><path d="M2.500,7 L15.500,7 L14,13.500 L1,13.500 Z" fill="#fbe68a" stroke="#a88420" stroke-width=".8"/></svg><span>berechnungs progra...</span></div>
<div class="tb act" style="left:522px;width:158px"><svg width="16" height="16" viewBox="0 0 16 16"><rect width="16" height="16" fill="#2424c8"/><text x="8" y="12" font-family="Liberation Sans,sans-serif" font-weight="bold" font-style="italic" font-size="10.500" fill="#f4f428" text-anchor="middle" textLength="14" lengthAdjust="spacingAndGlyphs">2T</text></svg><span>Exhaust Calculator 2.0b</span></div>
<div class="tb" style="left:682px;width:157px"><svg width="16" height="16" viewBox="0 0 16 16"><ellipse cx="8.0" cy="3.2" rx="2.900" ry="2" fill="#38b838" transform="rotate(-90 8.0 3.2)"/><ellipse cx="11.4" cy="4.6" rx="2.900" ry="2" fill="#38b838" transform="rotate(-45 11.4 4.6)"/><ellipse cx="12.8" cy="8.0" rx="2.900" ry="2" fill="#38b838" transform="rotate(0 12.8 8.0)"/><ellipse cx="11.4" cy="11.4" rx="2.900" ry="2" fill="#38b838" transform="rotate(45 11.4 11.4)"/><ellipse cx="8.0" cy="12.8" rx="2.900" ry="2" fill="#38b838" transform="rotate(90 8.0 12.8)"/><ellipse cx="4.6" cy="11.4" rx="2.900" ry="2" fill="#e02828" transform="rotate(135 4.6 11.4)"/><ellipse cx="3.2" cy="8.0" rx="2.900" ry="2" fill="#38b838" transform="rotate(180 3.2 8.0)"/><ellipse cx="4.6" cy="4.6" rx="2.900" ry="2" fill="#38b838" transform="rotate(225 4.6 4.6)"/><circle cx="8" cy="8" r="2" fill="#f8e020"/></svg><span>ICQ</span></div>
<div id="tray">
<svg style="position:absolute;left:9px;top:6px" width="130" height="20" viewBox="0 0 130 20">
<g transform="translate(1,1)"><circle cx="6" cy="5" r="3.800" fill="#3cb03c"/><circle cx="11" cy="5.500" r="3.800" fill="#48bc48"/><circle cx="4" cy="10" r="3.800" fill="#3cb03c"/><circle cx="8" cy="13" r="3.800" fill="#2ea02e"/><path d="M7,10 L15,7.500 L17,13 L9,16.500 Z" fill="#f4f4f4" stroke="#9aa" stroke-width=".6"/></g>
<rect x="20" y="2" width="16" height="16" fill="#e8801c"/><path d="M23,14.500 L33,14.500 M24,12 Q28,13 32,12 M28,4 Q25,7 28,8.500 Q30,10 27,11" stroke="#fff" stroke-width="1.300" fill="none"/>
<path d="M45,2 L52,4 L52,10 Q51,15 45,18 Q39,15 38,10 L38,4 Z" fill="#f0d428" stroke="#a08c10" stroke-width=".8"/><rect x="44.200" y="6" width="1.800" height="5.500" fill="#403000"/><rect x="44.200" y="12.700" width="1.800" height="1.800" fill="#403000"/>
<circle cx="62.500" cy="10" r="6" fill="#8c8c94"/><circle cx="62" cy="10" r="3.200" fill="#d8d8dc"/><path d="M66,5 Q70,10 66,15" stroke="#555" stroke-width="1.200" fill="none"/>
<rect x="74" y="2" width="16" height="16" fill="#141c6c"/><circle cx="82" cy="10" r="2.200" fill="#f4e020"/><path d="M78.500,6 Q76.500,10 78.500,14 M85.500,6 Q87.500,10 85.500,14" stroke="#f4e020" stroke-width="1.300" fill="none"/>
<rect x="92" y="2" width="16" height="16" fill="#e01c24"/><path d="M95,15 Q95,5 101,5 Q105,5 103,9 Q101,11 98,10 L105,15" stroke="#fff" stroke-width="1.700" fill="none"/>
<defs><radialGradient id="rb" cx=".38" cy=".32" r=".7"><stop offset="0" stop-color="#ff9a88"/><stop offset=".45" stop-color="#e02818"/><stop offset="1" stop-color="#8c0c08"/></radialGradient></defs>
<circle cx="118" cy="10" r="8" fill="url(#rb)"/>
</svg>
<span class="clk">20:37</span>
</div>
</div>
</body>
</html>
